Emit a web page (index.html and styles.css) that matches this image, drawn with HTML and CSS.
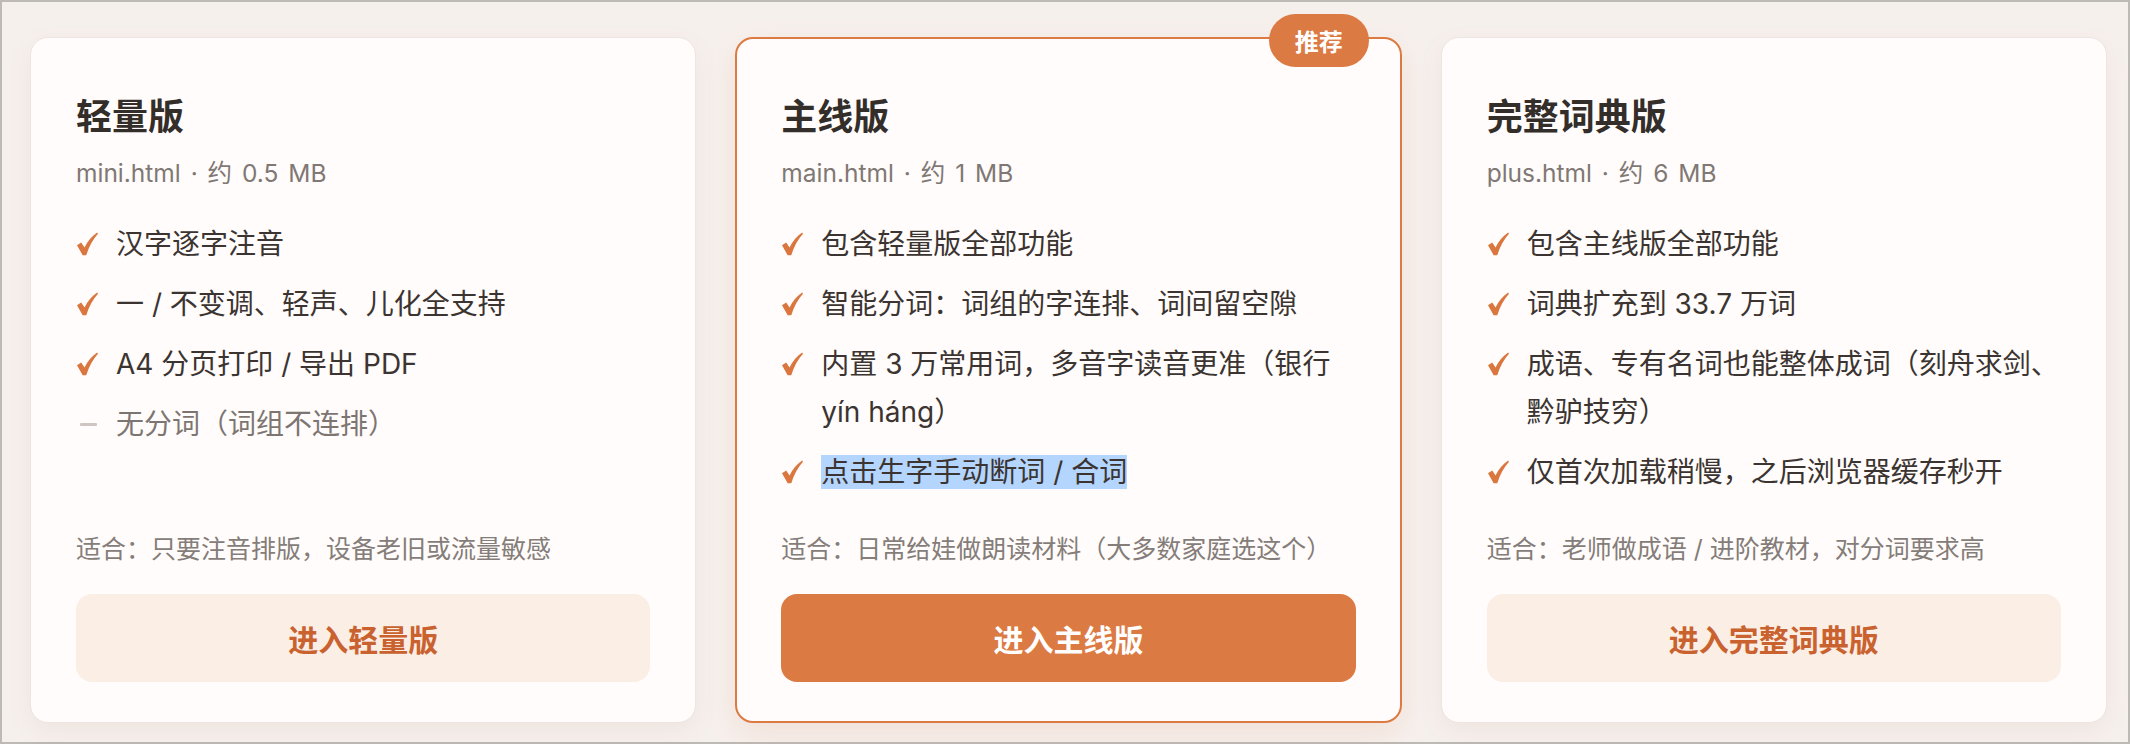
FILE: index.html
```html
<!DOCTYPE html>
<html lang="zh-CN">
<head>
<meta charset="utf-8">
<title>选择版本</title>
<link rel="stylesheet" href="styles.css">
</head>
<body>
<div class="frame">
  <main class="plans">
    <section class="card">
      <h2 class="title">轻量版</h2>
      <p class="meta">mini.html · 约 0.5 MB</p>
      <ul class="features">
        <li class="feat"><span class="mark"><svg class="check" viewBox="0 0 20 22"><path d="M0 12.2 L4 9.6 L7.2 14.4 C10 8.4 14.2 3.2 19.2 0 L20 1.2 C15.2 6.4 11.4 13.4 8.8 21.8 L5.4 21.8 Z"/></svg></span><span class="txt">汉字逐字注音</span></li>
        <li class="feat"><span class="mark"><svg class="check" viewBox="0 0 20 22"><path d="M0 12.2 L4 9.6 L7.2 14.4 C10 8.4 14.2 3.2 19.2 0 L20 1.2 C15.2 6.4 11.4 13.4 8.8 21.8 L5.4 21.8 Z"/></svg></span><span class="txt">一 / 不变调、轻声、儿化全支持</span></li>
        <li class="feat"><span class="mark"><svg class="check" viewBox="0 0 20 22"><path d="M0 12.2 L4 9.6 L7.2 14.4 C10 8.4 14.2 3.2 19.2 0 L20 1.2 C15.2 6.4 11.4 13.4 8.8 21.8 L5.4 21.8 Z"/></svg></span><span class="txt">A4 分页打印 / 导出 PDF</span></li>
        <li class="feat off"><span class="mark"><span class="dash"></span></span><span class="txt">无分词（词组不连排）</span></li>
      </ul>
      <p class="fit">适合：只要注音排版，设备老旧或流量敏感</p>
      <a class="btn">进入轻量版</a>
    </section>

    <section class="card featured">
      <span class="badge">推荐</span>
      <h2 class="title">主线版</h2>
      <p class="meta">main.html · 约 1 MB</p>
      <ul class="features">
        <li class="feat"><span class="mark"><svg class="check" viewBox="0 0 20 22"><path d="M0 12.2 L4 9.6 L7.2 14.4 C10 8.4 14.2 3.2 19.2 0 L20 1.2 C15.2 6.4 11.4 13.4 8.8 21.8 L5.4 21.8 Z"/></svg></span><span class="txt">包含轻量版全部功能</span></li>
        <li class="feat"><span class="mark"><svg class="check" viewBox="0 0 20 22"><path d="M0 12.2 L4 9.6 L7.2 14.4 C10 8.4 14.2 3.2 19.2 0 L20 1.2 C15.2 6.4 11.4 13.4 8.8 21.8 L5.4 21.8 Z"/></svg></span><span class="txt">智能分词：词组的字连排、词间留空隙</span></li>
        <li class="feat"><span class="mark"><svg class="check" viewBox="0 0 20 22"><path d="M0 12.2 L4 9.6 L7.2 14.4 C10 8.4 14.2 3.2 19.2 0 L20 1.2 C15.2 6.4 11.4 13.4 8.8 21.8 L5.4 21.8 Z"/></svg></span><span class="txt">内置 3 万常用词，多音字读音更准（银行 yín háng）</span></li>
        <li class="feat"><span class="mark"><svg class="check" viewBox="0 0 20 22"><path d="M0 12.2 L4 9.6 L7.2 14.4 C10 8.4 14.2 3.2 19.2 0 L20 1.2 C15.2 6.4 11.4 13.4 8.8 21.8 L5.4 21.8 Z"/></svg></span><span class="txt"><span class="hl">点击生字手动断词 / 合词</span></span></li>
      </ul>
      <p class="fit">适合：日常给娃做朗读材料（大多数家庭选这个）</p>
      <a class="btn primary">进入主线版</a>
    </section>

    <section class="card">
      <h2 class="title">完整词典版</h2>
      <p class="meta">plus.html · 约 6 MB</p>
      <ul class="features">
        <li class="feat"><span class="mark"><svg class="check" viewBox="0 0 20 22"><path d="M0 12.2 L4 9.6 L7.2 14.4 C10 8.4 14.2 3.2 19.2 0 L20 1.2 C15.2 6.4 11.4 13.4 8.8 21.8 L5.4 21.8 Z"/></svg></span><span class="txt">包含主线版全部功能</span></li>
        <li class="feat"><span class="mark"><svg class="check" viewBox="0 0 20 22"><path d="M0 12.2 L4 9.6 L7.2 14.4 C10 8.4 14.2 3.2 19.2 0 L20 1.2 C15.2 6.4 11.4 13.4 8.8 21.8 L5.4 21.8 Z"/></svg></span><span class="txt">词典扩充到 33.7 万词</span></li>
        <li class="feat"><span class="mark"><svg class="check" viewBox="0 0 20 22"><path d="M0 12.2 L4 9.6 L7.2 14.4 C10 8.4 14.2 3.2 19.2 0 L20 1.2 C15.2 6.4 11.4 13.4 8.8 21.8 L5.4 21.8 Z"/></svg></span><span class="txt">成语、专有名词也能整体成词（刻舟求剑、黔驴技穷）</span></li>
        <li class="feat"><span class="mark"><svg class="check" viewBox="0 0 20 22"><path d="M0 12.2 L4 9.6 L7.2 14.4 C10 8.4 14.2 3.2 19.2 0 L20 1.2 C15.2 6.4 11.4 13.4 8.8 21.8 L5.4 21.8 Z"/></svg></span><span class="txt">仅首次加载稍慢，之后浏览器缓存秒开</span></li>
      </ul>
      <p class="fit">适合：老师做成语 / 进阶教材，对分词要求高</p>
      <a class="btn">进入完整词典版</a>
    </section>
  </main>
</div>
</body>
</html>
```

FILE: styles.css
```css
* { box-sizing: border-box; }

html, body {
  margin: 0;
  padding: 0;
}

body {
  font-family: "Inter", "Noto Sans CJK SC", sans-serif;
  background: #f6f0ed;
}

.frame {
  width: 2130px;
  height: 744px;
  border: 2px solid #bdb9b5;
  background: #f6f0ed;
}

.plans {
  display: grid;
  grid-template-columns: repeat(3, 1fr);
  column-gap: 39px;
  padding: 35px 21px 19px 28px;
  height: 100%;
}

.card {
  position: relative;
  display: flex;
  flex-direction: column;
  background: #fffcfb;
  border: 1px solid #eee4e0;
  border-radius: 18px;
  padding: 53px 45px 40px 45px;
  box-shadow: 0 8px 26px rgba(140, 90, 60, 0.07);
}

.card.featured {
  border: 2px solid #dc7a43;
  padding: 52px 44px 39px 44px;
  box-shadow: 0 10px 30px rgba(220, 122, 67, 0.13);
}

.badge {
  position: absolute;
  top: -25px;
  right: 31px;
  height: 53px;
  padding: 0 26px;
  border-radius: 27px;
  background: #dc7a43;
  color: #fff;
  font-family: "Noto Sans CJK SC", sans-serif;
  font-weight: 700;
  font-size: 24px;
  line-height: 53px;
}

.title {
  margin: 0;
  font-family: "Noto Sans CJK SC", sans-serif;
  font-size: 36px;
  line-height: 47px;
  font-weight: 700;
  color: #342e2b;
}

.meta {
  margin: 18px 0 0;
  font-size: 24.5px;
  line-height: 34px;
  word-spacing: 3px;
  color: #7f7874;
}

.features {
  list-style: none;
  margin: 30px 0 24px;
  padding: 0;
  display: flex;
  flex-direction: column;
  gap: 12px;
}

.feat {
  display: flex;
  align-items: flex-start;
  font-size: 28px;
  line-height: 48px;
  color: #3b3431;
}

.feat.off {
  color: #7d7572;
}

.mark {
  flex: 0 0 40px;
  height: 48px;
  display: flex;
  align-items: center;
  padding-left: 1px;
}

.check {
  width: 21px;
  height: 24px;
  fill: #d9773f;
}

.dash {
  display: block;
  width: 17px;
  height: 3px;
  margin-left: 3px;
  background: #cdc6c2;
  border-radius: 1px;
}

.txt {
  flex: 1;
  min-width: 0;
}

.hl {
  background: #b4d5fe;
}

.fit {
  margin: auto 0 0;
  font-size: 25px;
  line-height: 34px;
  color: #857d79;
}

.btn {
  display: flex;
  align-items: center;
  justify-content: center;
  margin-top: 28px;
  height: 88px;
  border-radius: 16px;
  background: #fbeee5;
  color: #c9622f;
  font-family: "Noto Sans CJK SC", sans-serif;
  font-weight: 700;
  font-size: 30px;
  text-decoration: none;
}

.btn.primary {
  background: #dc7a43;
  color: #ffffff;
}
```
